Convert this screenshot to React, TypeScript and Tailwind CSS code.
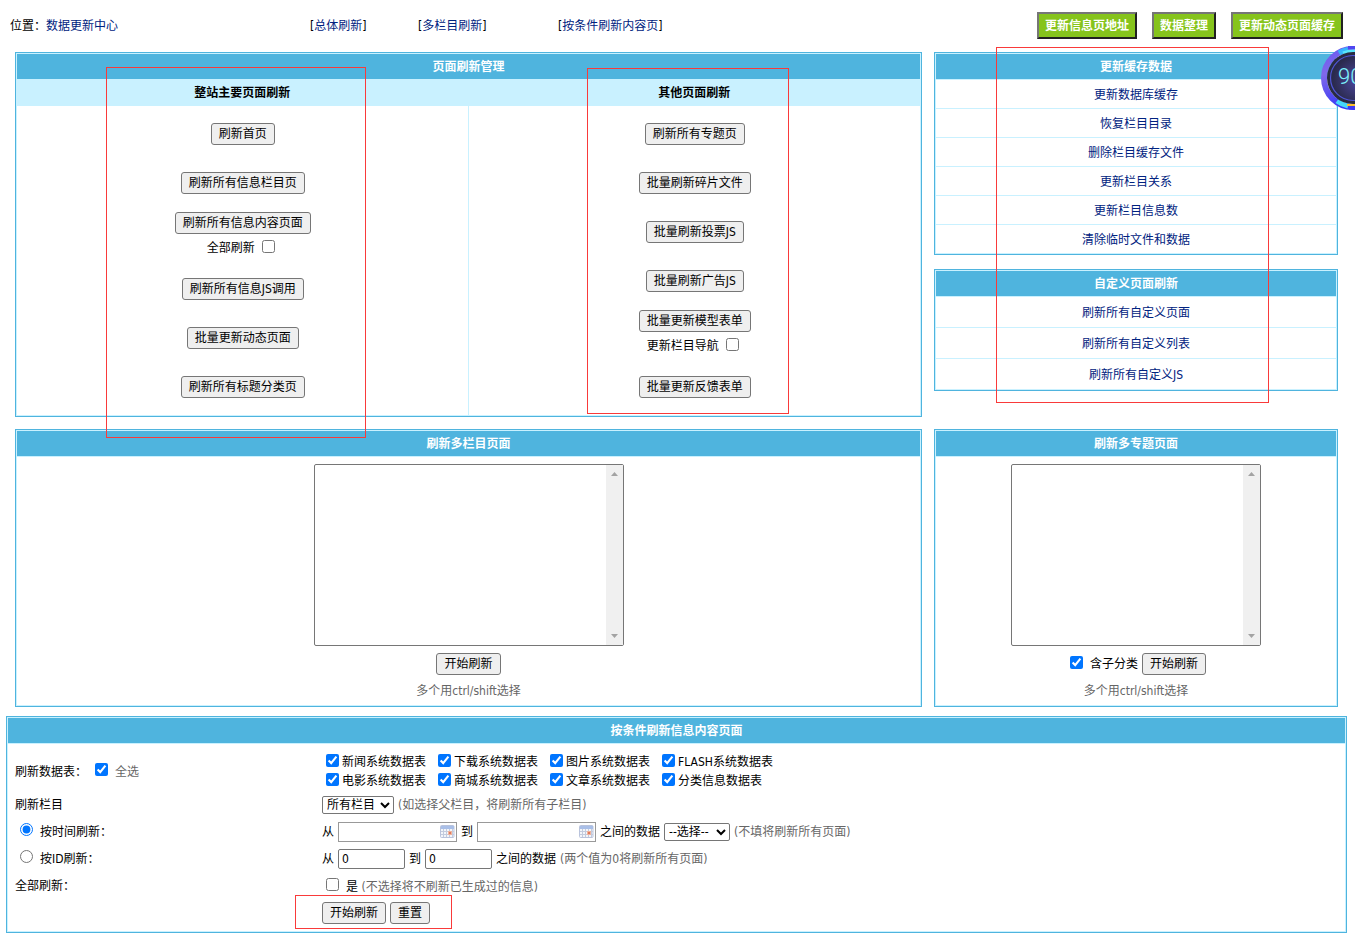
import React from "react";

type Children = { children: React.ReactNode };

function Panel({ title, className = "", children }: Children & { title: string; className?: string }) {
  return (
    <section className={`flex flex-col border border-[#4fb4de] ${className}`}>
      <div className="flex grow flex-col border border-[#c9f1ff]">
        <h2 className="h-[25px] bg-[#4fb4de] text-center leading-[27px] font-bold text-white">{title}</h2>
        {children}
      </div>
    </section>
  );
}

function Btn({ children, type = "button" }: Children & { type?: "button" | "submit" | "reset" }) {
  return (
    <button
      type={type}
      className="h-[22px] rounded-[3px] border border-[#767676] bg-[#efefef] px-[7px] pt-px leading-[19px] whitespace-nowrap text-black"
    >
      {children}
    </button>
  );
}

function TopButton({ children }: Children) {
  return (
    <button
      type="button"
      className="h-[27px] border-2 border-t-[#767676] border-r-[#212121] border-b-[#212121] border-l-[#767676] bg-[#86c41c] px-[6px] pt-[2px] leading-[21px] font-bold whitespace-nowrap text-white"
    >
      {children}
    </button>
  );
}

function BracketLink({ children, className = "" }: Children & { className?: string }) {
  return (
    <span className={`whitespace-nowrap ${className}`}>
      [<a href="#" className="text-[#002280]">{children}</a>]
    </span>
  );
}

type Action = { label: string; option?: string };

function ActionColumn({ items }: { items: Action[] }) {
  return (
    <div className="flex flex-col items-center pt-[3px] pb-1 pl-px">
      {items.map((item) =>
        item.option ? (
          <div key={item.label} className="flex h-[57px] flex-col items-center pt-[5px]">
            <Btn>{item.label}</Btn>
            <label className="flex h-7 items-center gap-[7px] pr-1">
              <span>{item.option}</span>
              <input type="checkbox" className="mb-1 size-[13px]" />
            </label>
          </div>
        ) : (
          <div key={item.label} className="flex h-[49px] items-center">
            <Btn>{item.label}</Btn>
          </div>
        )
      )}
    </div>
  );
}

function LinkRows({ items, rowClass }: { items: string[]; rowClass: string }) {
  return (
    <ul>
      {items.map((item) => (
        <li key={item} className={`flex items-center justify-center border-t border-[#c9f1ff] pt-[2px] ${rowClass}`}>
          <a href="#" className="text-[#002280]">{item}</a>
        </li>
      ))}
    </ul>
  );
}

function ListBox({ label, className }: { label: string; className: string }) {
  return (
    <div className={`relative h-[182px] ${className}`}>
      <select
        multiple
        aria-label={label}
        className="block size-full overflow-hidden rounded-[2px] border border-[#767676] bg-white"
      />
      <div className="pointer-events-none absolute inset-y-px right-px flex w-[17px] flex-col items-center justify-between bg-[#f0f0f0] py-[7px]">
        <svg width="7" height="4" viewBox="0 0 7 4"><path d="M0 4L3.5 0L7 4Z" fill="#a3a3a3" /></svg>
        <svg width="7" height="4" viewBox="0 0 7 4"><path d="M0 0L3.5 4L7 0Z" fill="#a3a3a3" /></svg>
      </div>
    </div>
  );
}

function CalendarIcon() {
  return (
    <svg width="15" height="13" viewBox="0 0 15 13" className="pointer-events-none absolute top-[3px] right-[2px]">
      <rect x="0.5" y="0.5" width="13.5" height="12" rx="1" fill="#f3f5fa" stroke="#b9c3dc" />
      <rect x="1" y="1" width="13" height="3" fill="#a9bfe8" />
      <path d="M1 6.5H14M1 9.5H14M3.5 4V12M6.5 4V12M9.5 4V12M12.5 4V12" stroke="#c3cbdd" strokeWidth="1" />
      <rect x="8" y="6" width="4" height="4" fill="#f0b39c" />
      <rect x="9" y="7" width="2" height="2" fill="#e07a5c" />
    </svg>
  );
}

function DateBox({ label }: { label: string }) {
  return (
    <span className="relative block h-5 w-[119px]">
      <input type="text" aria-label={label} className="block size-full border border-[#999999] bg-white pr-5 pl-[3px]" />
      <CalendarIcon />
    </span>
  );
}

function NumberBox({ label }: { label: string }) {
  return (
    <input
      type="text"
      aria-label={label}
      defaultValue="0"
      className="h-5 w-[67px] rounded-[2px] border border-[#767676] bg-white px-[3px]"
    />
  );
}

const Hint = ({ children }: Children) => <span className="text-[#666666]">{children}</span>;

function Marker({ className }: { className: string }) {
  return <div aria-hidden="true" className={`pointer-events-none absolute border border-[#f93a3a] ${className}`} />;
}

function ScoreBadge() {
  return (
    <div className="absolute top-[46px] right-0 h-16 w-[34px] overflow-hidden">
      <svg width="64" height="64" viewBox="0 0 64 64" className="absolute top-0 left-0 max-w-none">
        <defs>
          <linearGradient id="ring" x1="0" y1="0" x2="0.3" y2="1">
            <stop offset="0" stopColor="#6a5cf0" />
            <stop offset="0.4" stopColor="#8068ea" />
            <stop offset="1" stopColor="#3a3af5" />
          </linearGradient>
          <radialGradient id="face" cx="0.6" cy="0.55" r="0.55">
            <stop offset="0" stopColor="#4c47a0" />
            <stop offset="1" stopColor="#2a2a4c" />
          </radialGradient>
        </defs>
        <circle cx="32" cy="32" r="29" fill="none" stroke="url(#ring)" strokeWidth="6" />
        <path d="M18 7A29 29 0 0 1 27 3.500" fill="none" stroke="#35b5fb" strokeWidth="5" />
        <path d="M22 7A27 27 0 0 1 34 5" fill="none" stroke="#58e6fa" strokeWidth="3" />
        <path d="M27 1.500H34" stroke="#5046f0" strokeWidth="3" />
        <path d="M16 55A28 28 0 0 0 27 60" fill="none" stroke="#45d8fa" strokeWidth="5" />
        <path d="M28 62H34" stroke="#3f3af5" strokeWidth="3" />
        <circle cx="32" cy="32" r="26" fill="#292b42" />
        <circle cx="32" cy="32" r="22.500" fill="url(#face)" stroke="#4f56d8" strokeWidth="1.200" />
        <path d="M26 59H34" stroke="#fbc02d" strokeWidth="2" />
      </svg>
      <span className="absolute top-[19px] left-[17px] font-[Roboto,sans-serif] text-[22px] leading-[24px] font-light text-[#7df3fb]">
        90
      </span>
    </div>
  );
}

const siteActions: Action[] = [
  { label: "刷新首页" },
  { label: "刷新所有信息栏目页" },
  { label: "刷新所有信息内容页面", option: "全部刷新" },
  { label: "刷新所有信息JS调用" },
  { label: "批量更新动态页面" },
  { label: "刷新所有标题分类页" },
];

const otherActions: Action[] = [
  { label: "刷新所有专题页" },
  { label: "批量刷新碎片文件" },
  { label: "批量刷新投票JS" },
  { label: "批量刷新广告JS" },
  { label: "批量更新模型表单", option: "更新栏目导航" },
  { label: "批量更新反馈表单" },
];

const tables = [
  "新闻系统数据表",
  "下载系统数据表",
  "图片系统数据表",
  "FLASH系统数据表",
  "电影系统数据表",
  "商城系统数据表",
  "文章系统数据表",
  "分类信息数据表",
];

export default function App() {
  return (
    <div
      lang="zh-CN"
      className="relative overflow-hidden bg-white pb-1.5 font-['DejaVu_Sans_Condensed','Noto_Sans_CJK_SC',sans-serif] text-[12px] leading-[18px] text-black"
    >
      <header className="flex h-[51px] items-center justify-between pr-3 pl-2.5">
        <nav className="flex">
          <span className="w-[300px]">
            位置：<a href="#" className="text-[#002280]">数据更新中心</a>
          </span>
          <BracketLink className="w-[108px]">总体刷新</BracketLink>
          <BracketLink className="w-[140px]">多栏目刷新</BracketLink>
          <BracketLink>按条件刷新内容页</BracketLink>
        </nav>
        <div className="flex gap-[15px]">
          <TopButton>更新信息页地址</TopButton>
          <TopButton>数据整理</TopButton>
          <TopButton>更新动态页面缓存</TopButton>
        </div>
      </header>

      <main className="pt-px">
        <div className="grid grid-cols-[907fr_404fr] gap-3 pr-[17px] pl-[15px]">
          <Panel title="页面刷新管理">
            <div className="grid grow grid-cols-2">
              <div className="relative flex flex-col border-r border-[#c9f1ff]">
                <h3 className="h-[27px] bg-[#c9f1ff] text-center leading-[29px] font-bold">整站主要页面刷新</h3>
                <ActionColumn items={siteActions} />
                <Marker className="-top-3 left-[89px] z-10 h-[371px] w-[260px]" />
              </div>
              <div className="relative flex flex-col">
                <h3 className="h-[27px] bg-[#c9f1ff] text-center leading-[29px] font-bold">其他页面刷新</h3>
                <ActionColumn items={otherActions} />
                <Marker className="-top-[11px] left-[118px] z-10 h-[346px] w-[202px]" />
              </div>
            </div>
          </Panel>

          <div className="relative flex flex-col gap-[14px]">
            <Panel title="更新缓存数据">
              <LinkRows
                rowClass="h-[29px]"
                items={["更新数据库缓存", "恢复栏目目录", "删除栏目缓存文件", "更新栏目关系", "更新栏目信息数", "清除临时文件和数据"]}
              />
            </Panel>
            <Panel title="自定义页面刷新">
              <LinkRows rowClass="h-[31px]" items={["刷新所有自定义页面", "刷新所有自定义列表", "刷新所有自定义JS"]} />
            </Panel>
            <Marker className="-top-[5px] left-[62px] z-10 h-[356px] w-[273px]" />
          </div>

          <Panel title="刷新多栏目页面">
            <div className="flex flex-col items-center border-t border-[#c9f1ff] pt-[7px] pb-[5px]">
              <ListBox label="栏目" className="w-[310px]" />
              <div className="flex pt-[7px] pb-[7px]">
                <Btn>开始刷新</Btn>
              </div>
              <Hint>多个用ctrl/shift选择</Hint>
            </div>
          </Panel>

          <Panel title="刷新多专题页面">
            <div className="flex flex-col items-center border-t border-[#c9f1ff] pt-[7px] pb-[5px]">
              <ListBox label="专题" className="w-[250px]" />
              <div className="flex items-center gap-1 pt-[7px] pb-[7px] pl-1">
                <label className="flex items-center gap-[7px]">
                  <input type="checkbox" defaultChecked className="mb-1 size-[13px]" />
                  含子分类
                </label>
                <Btn>开始刷新</Btn>
              </div>
              <Hint>多个用ctrl/shift选择</Hint>
            </div>
          </Panel>
        </div>

        <form className="mt-[9px] pr-2 pl-1.5" onSubmit={(e) => e.preventDefault()}>
          <Panel title="按条件刷新信息内容页面">
            <div className="grid auto-rows-[27px] grid-cols-[307px_1fr] grid-rows-[47px] items-center border-t border-[#c9f1ff] pb-[5px] pl-[7px]">
              <div className="flex items-center pt-2">
                <span className="w-20">刷新数据表：</span>
                <label className="flex items-center gap-[7px]">
                  <input type="checkbox" defaultChecked className="mb-1 size-[13px]" />
                  <Hint>全选</Hint>
                </label>
              </div>
              <div className="grid grid-cols-[repeat(4,max-content)] gap-x-3 pt-2 pl-1 leading-[19px]">
                {tables.map((name) => (
                  <label key={name} className="flex items-center gap-[3px]">
                    <input type="checkbox" defaultChecked className="mb-1 size-[13px]" />
                    {name}
                  </label>
                ))}
              </div>

              <label htmlFor="category" className="row-start-2">刷新栏目</label>
              <div className="flex items-center gap-1">
                <select id="category" className="h-[18px] w-[72px] rounded-[2px] border border-[#767676] bg-white leading-[16px]">
                  <option>所有栏目</option>
                </select>
                <Hint>(如选择父栏目，将刷新所有子栏目)</Hint>
              </div>

              <label className="flex items-center gap-[7px] pl-[5px]">
                <input type="radio" name="mode" defaultChecked className="mb-1 size-[13px]" />
                按时间刷新：
              </label>
              <div className="flex items-center gap-1">
                <span>从</span>
                <DateBox label="开始时间" />
                <span>到</span>
                <DateBox label="结束时间" />
                <span>之间的数据</span>
                <select aria-label="时间范围" className="h-[18px] w-[66px] rounded-[2px] border border-[#767676] bg-white leading-[16px]">
                  <option>--选择--</option>
                </select>
                <Hint>(不填将刷新所有页面)</Hint>
              </div>

              <label className="flex items-center gap-[7px] pl-[5px]">
                <input type="radio" name="mode" className="mb-1 size-[13px]" />
                按ID刷新：
              </label>
              <div className="flex items-center gap-1">
                <span>从</span>
                <NumberBox label="起始ID" />
                <span>到</span>
                <NumberBox label="结束ID" />
                <span>之间的数据</span>
                <Hint>(两个值为0将刷新所有页面)</Hint>
              </div>

              <span>全部刷新：</span>
              <label className="flex items-center gap-[7px] pt-[2px] pl-1">
                <input type="checkbox" className="mb-1 size-[13px]" />
                <span>
                  是 <Hint>(不选择将不刷新已生成过的信息)</Hint>
                </span>
              </label>

              <div className="relative col-start-2 flex items-center gap-1">
                <Btn type="submit">开始刷新</Btn>
                <Btn type="reset">重置</Btn>
                <Marker className="-top-[7px] -left-[27px] h-[34px] w-[157px]" />
              </div>
            </div>
          </Panel>
        </form>
      </main>

      <ScoreBadge />
    </div>
  );
}
